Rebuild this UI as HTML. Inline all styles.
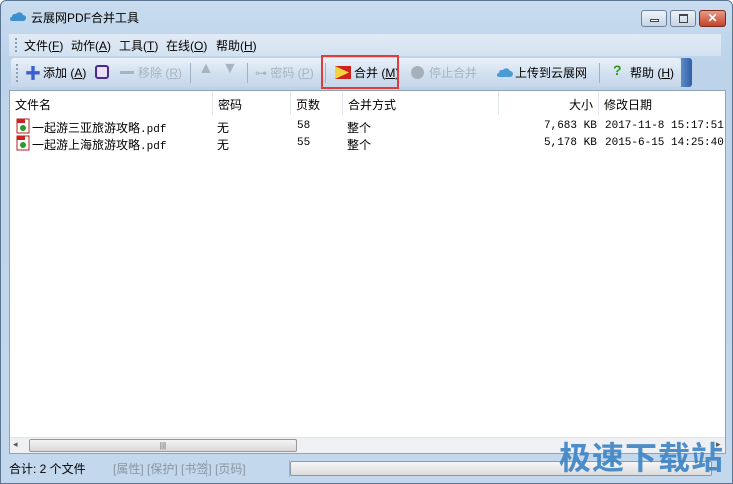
<!DOCTYPE html>
<html><head><meta charset="utf-8"><style>
*{margin:0;padding:0;box-sizing:border-box}
body{width:733px;height:484px;overflow:hidden;font-family:"Liberation Sans","Noto Sans CJK SC",sans-serif;font-size:12px;color:#000;background:#fff}
.win{position:absolute;left:0;top:0;width:733px;height:484px;background:linear-gradient(#c9dcef,#bcd3ea 60px,#c4d8ed);border:1px solid #5a7590;border-radius:6px 6px 0 0}
.abs{position:absolute}
.title{left:30px;top:8px;font-size:12px}
.btn{top:9px;height:17px;border:1px solid #6d819a;border-radius:3px;background:linear-gradient(#eef3f9,#c7d4e4)}
.menu{left:8px;top:33px;width:712px;height:22px;background:linear-gradient(#e2ebf5,#d3e1f0)}
.menu span{position:absolute;top:3px}
.tb{left:10px;top:57px;width:670px;height:29px;background:linear-gradient(#eaf1f9,#d2e0ef 55%,#c6d7ea);border-radius:3px}
.tb>span{position:absolute;top:6px;white-space:nowrap}
.dis{color:#a7b4c2}
.list{left:8px;top:89px;width:717px;height:364px;background:#fff;border:1px solid #8ea3b9}
.hd{position:absolute;top:0;height:24px;border-right:1px solid #e3e8ee;padding:5px 0 0 5px}
.row>span{position:absolute}
.mono{font-family:"Liberation Mono","Noto Sans CJK SC",monospace;font-size:11px}
.status{top:455px;left:5px;width:722px;height:24px}
</style></head><body>
<div class="win">
<svg class="abs" style="left:9px;top:11px" width="16" height="10"><path d="M2 9h11a3 3 0 0 0 0-6 4 4 0 0 0-7-1 3 3 0 0 0-4 3 2 2 0 0 0 0 4z" fill="#3d8fd0"/></svg>
<div class="abs title">云展网PDF合并工具</div>
<div class="abs btn" style="left:640px;width:26px"><div class="abs" style="left:8px;top:8px;width:9px;height:3px;border:1px solid #444;background:#fff"></div></div>
<div class="abs btn" style="left:669px;width:26px"><div class="abs" style="left:8px;top:3px;width:9px;height:9px;border:1px solid #444;border-top-width:2px"></div></div>
<div class="abs btn" style="left:698px;width:27px;background:linear-gradient(#e89a86,#c4432a);border-color:#7a2a1c;color:#fff;font-weight:bold;text-align:center;line-height:15px">✕</div>
<div class="abs menu">
<div class="abs" style="left:6px;top:4px;height:14px;border-left:2px dotted #8aa0b8"></div>
<span style="left:15px">文件(<u>F</u>)</span><span style="left:62px">动作(<u>A</u>)</span><span style="left:110px">工具(<u>T</u>)</span><span style="left:157px">在线(<u>O</u>)</span><span style="left:207px">帮助(<u>H</u>)</span>
</div>
<div class="abs tb">
<div class="abs" style="left:5px;top:6px;height:18px;border-left:2px dotted #8aa0b8"></div>
<span style="left:14px;color:#3a5fd0;font-weight:bold;font-size:16px;top:2px">✚</span><span style="left:32px">添加 (<u>A</u>)</span>
<div class="abs" style="left:84px;top:7px;width:14px;height:14px;border:2px solid #4a2a8c;border-radius:3px;background:#e8e0f4"></div>
<div class="abs" style="left:109px;top:13px;width:14px;height:3px;background:#a7b4c2"></div><span class="dis" style="left:127px">移除 (<u>R</u>)</span>
<div class="abs" style="left:179px;top:5px;height:20px;border-left:1px solid #9fb2c6"></div>
<span class="dis" style="left:187px;font-size:16px;top:2px">▲</span><span class="dis" style="left:211px;font-size:16px;top:2px">▼</span>
<div class="abs" style="left:236px;top:5px;height:20px;border-left:1px solid #9fb2c6"></div>
<span class="dis" style="left:244px">⊶ 密码 (<u>P</u>)</span>
<div class="abs" style="left:314px;top:5px;height:20px;border-left:1px solid #9fb2c6"></div>
<svg class="abs" style="left:324px;top:8px" width="16" height="13"><rect width="16" height="13" fill="#c22"/><path d="M0 0L14 6.5 0 13z" fill="#f4d23c"/></svg>
<span style="left:343px">合并 (<u>M</u>)</span>
<div class="abs" style="left:400px;top:8px;width:13px;height:13px;border-radius:50%;background:#a7b0ba"></div><span class="dis" style="left:418px">停止合并</span>
<svg class="abs" style="left:486px;top:10px" width="16" height="10"><path d="M2 9h11a3 3 0 0 0 0-6 4 4 0 0 0-7-1 3 3 0 0 0-4 3 2 2 0 0 0 0 4z" fill="#4a9ad6"/></svg>
<span style="left:504px">上传到云展网</span>
<div class="abs" style="left:588px;top:5px;height:20px;border-left:1px solid #9fb2c6"></div>
<span style="left:602px;color:#2a9a1a;font-weight:bold;font-size:14px;top:4px">?</span><span style="left:619px">帮助 (<u>H</u>)</span>
</div>
<div class="abs" style="left:680px;top:57px;width:11px;height:29px;background:linear-gradient(90deg,#5d8cc8,#2f5ea8);border-radius:0 3px 3px 0"></div>
<div class="abs" style="left:320px;top:54px;width:78px;height:34px;border:2px solid #e03c3c"></div>
<div class="abs list">
<div class="hd" style="left:0;width:203px">文件名</div>
<div class="hd" style="left:203px;width:78px">密码</div>
<div class="hd" style="left:281px;width:52px">页数</div>
<div class="hd" style="left:333px;width:156px">合并方式</div>
<div class="hd" style="left:489px;width:100px;text-align:right;padding-right:5px">大小</div>
<div class="hd" style="left:589px;width:126px;border:none">修改日期</div>
<div class="row" style="position:absolute;top:27px;left:0;width:715px;height:17px">
<svg class="abs" style="left:6px;top:0" width="14" height="16"><rect x="1" y="1" width="12" height="14" fill="#fff" stroke="#b02020"/><rect x="1" y="1" width="8" height="4" fill="#c22"/><circle cx="7" cy="10" r="3" fill="#2a9a2a"/></svg>
<span style="left:22px;top:1px">一起游三亚旅游攻略<span class="mono">.pdf</span></span><span style="left:207px;top:1px">无</span><span class="mono" style="left:287px;top:2px">58</span><span style="left:337px;top:1px">整个</span><span class="mono" style="left:534px;top:2px">7,683 KB</span><span class="mono" style="left:595px;top:2px">2017-11-8 15:17:51</span></div>
<div class="row" style="position:absolute;top:44px;left:0;width:715px;height:17px">
<svg class="abs" style="left:6px;top:0" width="14" height="16"><rect x="1" y="1" width="12" height="14" fill="#fff" stroke="#b02020"/><rect x="1" y="1" width="8" height="4" fill="#c22"/><circle cx="7" cy="10" r="3" fill="#2a9a2a"/></svg>
<span style="left:22px;top:1px">一起游上海旅游攻略<span class="mono">.pdf</span></span><span style="left:207px;top:1px">无</span><span class="mono" style="left:287px;top:2px">55</span><span style="left:337px;top:1px">整个</span><span class="mono" style="left:534px;top:2px">5,178 KB</span><span class="mono" style="left:595px;top:2px">2015-6-15 14:25:40</span></div>
<div class="abs" style="left:0;top:346px;width:715px;height:16px;background:#eef0f3;border-top:1px solid #e0e4e8">
<span class="abs" style="left:3px;top:1px;font-size:9px;color:#555">◂</span>
<div class="abs" style="left:19px;top:1px;width:268px;height:13px;border:1px solid #999;border-radius:2px;background:linear-gradient(#f4f4f4,#d8d8d8);text-align:center;font-size:8px;line-height:11px;color:#555">|||</div>
<span class="abs" style="left:706px;top:1px;font-size:9px;color:#555">▸</span></div>
</div>
<div class="abs status">
<span class="abs" style="left:3px;top:4px">合计: 2 个文件</span>
<span class="abs" style="left:107px;top:4px;color:#8a96a4">[属性] [保护] [书签] [页码]</span>
<div class="abs" style="left:200px;top:4px;height:17px;border-left:1px solid #9fb2c6"></div>
<div class="abs" style="left:283px;top:4px;height:17px;border-left:1px solid #9fb2c6"></div>
<div class="abs" style="left:284px;top:5px;width:422px;height:15px;border:1px solid #8a98a8;border-radius:2px;background:linear-gradient(#f6f6f6,#dcdcdc)"></div>
</div>
<div class="abs" style="left:558px;top:432px;font-size:32px;font-weight:bold;color:#3d84c4;letter-spacing:1px;opacity:.9">极速下载站</div>
</div>
</body></html>
